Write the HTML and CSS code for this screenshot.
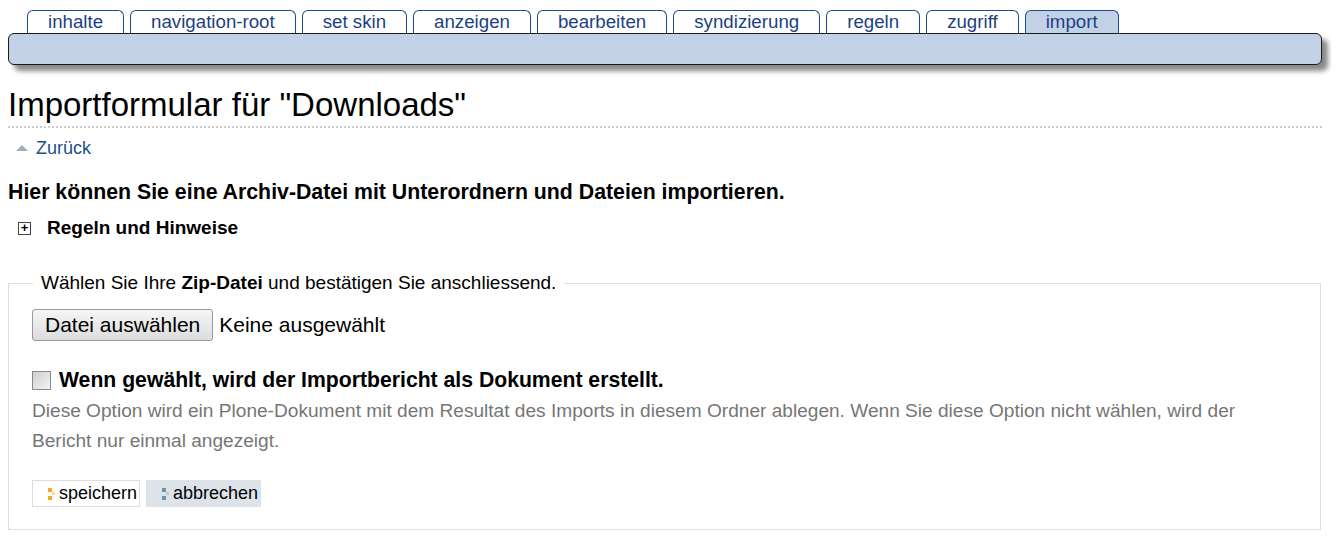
FILE: index.html
```html
<!DOCTYPE html>
<html lang="de">
<head>
    <meta charset="UTF-8">
    <title>Importformular für "Downloads"</title>
    <link rel="stylesheet" href="styles.css">
</head>
<body>
    <!-- content views -->
    <ul class="tabs">
        <li><a href="#">inhalte</a></li>
        <li><a href="#">navigation-root</a></li>
        <li><a href="#">set skin</a></li>
        <li><a href="#">anzeigen</a></li>
        <li><a href="#">bearbeiten</a></li>
        <li><a href="#">syndizierung</a></li>
        <li><a href="#">regeln</a></li>
        <li><a href="#">zugriff</a></li>
        <li class="selected"><a href="#">import</a></li>
    </ul>
    <div class="action-bar"></div>

    <h1 class="page-title">Importformular für "Downloads"</h1>

    <a href="#" class="back-link"><span class="up-arrow"></span>Zurück</a>

    <p class="lead">Hier können Sie eine Archiv-Datei mit Unterordnern und Dateien importieren.</p>

    <div class="toggle">
        <span class="plus-box">+</span>
        <span>Regeln und Hinweise</span>
    </div>

    <form class="import-form">
        <fieldset>
            <legend>Wählen Sie Ihre <b>Zip-Datei</b> und bestätigen Sie anschliessend.</legend>

            <div class="file-row">
                <button type="button" class="file-btn">Datei auswählen</button>
                <span class="file-name">Keine ausgewählt</span>
            </div>

            <label class="check-row">
                <input type="checkbox" class="check">
                <span>Wenn gewählt, wird der Importbericht als Dokument erstellt.</span>
            </label>
            <p class="help">Diese Option wird ein Plone-Dokument mit dem Resultat des Imports in diesem Ordner ablegen. Wenn Sie diese Option nicht wählen, wird der Bericht nur einmal angezeigt.</p>

            <div class="form-buttons">
                <button type="submit" class="btn save">
                    <svg width="8" height="14" viewBox="0 0 8 14"><rect x="0" y="1" width="4" height="4" fill="#f5a81c"/><rect x="4" y="5" width="3" height="3" fill="#fbd98f"/><rect x="0" y="9" width="4" height="4" fill="#f5a81c"/></svg>speichern
                </button>
                <button type="button" class="btn cancel">
                    <svg width="8" height="14" viewBox="0 0 8 14"><rect x="0" y="1" width="4" height="4" fill="#6e92a6"/><rect x="4" y="5" width="3" height="3" fill="#b8cbd6"/><rect x="0" y="9" width="4" height="4" fill="#6e92a6"/></svg>abbrechen
                </button>
            </div>
        </fieldset>
    </form>
</body>
</html>
```

FILE: styles.css
```css
body {
    margin: 8px;
    font-family: "Liberation Sans", Arial, sans-serif;
    color: #000;
    background: #fff;
}

.tabs {
    list-style: none;
    display: flex;
    gap: 6px;
    margin: 2px 0 0 0;
    padding: 0 0 0 19px;
}

.tabs li {
    border: 1px solid #1b4b8f;
    border-bottom: none;
    border-radius: 6px 6px 0 0;
    background: #fff;
    height: 22px;
}

.tabs li a {
    display: block;
    padding: 0 20px;
    line-height: 22px;
    font-size: 18.7px;
    color: #1d3f82;
    text-decoration: none;
}

.tabs li.selected {
    background: #c2d1e6;
}

.action-bar {
    height: 30px;
    margin-right: 10px;
    background: #c2d1e6;
    border: 1px solid #1a1a1a;
    border-radius: 6px;
    box-shadow: 6px 6px 5px #8a8a8a;
}

.page-title {
    font-size: 33px;
    font-weight: normal;
    margin: 22px 10px 0 0;
    padding-bottom: 3px;
    line-height: 36px;
    border-bottom: 2px dotted #ccc;
}

.back-link {
    display: inline-flex;
    align-items: center;
    margin: 9px 0 0 8px;
    font-size: 18px;
    line-height: 22px;
    color: #1f4e8c;
    text-decoration: none;
}

.up-arrow {
    width: 0;
    height: 0;
    border-left: 6px solid transparent;
    border-right: 6px solid transparent;
    border-bottom: 6px solid #9ab0c4;
    margin-right: 8px;
}

.lead {
    font-size: 21.3px;
    line-height: 24px;
    font-weight: bold;
    margin: 21px 0 0 0;
}

.toggle {
    display: flex;
    align-items: center;
    margin: 12px 0 0 10px;
    font-size: 19px;
    line-height: 24px;
    font-weight: bold;
}

.plus-box {
    width: 11px;
    height: 11px;
    border: 1px solid #444;
    font-size: 13px;
    line-height: 10px;
    text-align: center;
    margin-right: 16px;
}

.import-form {
    margin-top: 32px;
    margin-right: 11px;
}

fieldset {
    margin: 0;
    padding: 9px 23px 22px 23px;
    border: 1px solid #ddd;
}

legend {
    font-size: 19px;
    line-height: 22px;
    padding: 0 8px;
    margin-left: 1px;
}

.file-row {
    display: flex;
    align-items: center;
    margin-top: 6px;
}

.file-btn {
    font-family: "Liberation Sans", Arial, sans-serif;
    font-size: 21px;
    height: 32px;
    padding: 0 12px;
    border: 1px solid #9a9a9a;
    border-radius: 3px;
    background: linear-gradient(#f6f6f6, #dcdcdc);
    color: #000;
}

.file-name {
    font-size: 21px;
    margin-left: 6px;
}

.check-row {
    display: flex;
    align-items: center;
    margin-top: 26px;
    font-size: 21.2px;
    line-height: 26px;
    font-weight: bold;
}

.check {
    appearance: none;
    width: 19px;
    height: 19px;
    margin: 0 8px 0 0;
    border: 1px solid #8a8a8a;
    background: linear-gradient(135deg, #cfcfcf, #f4f4f4);
}

.help {
    margin: 3px 40px 0 0;
    font-size: 19.1px;
    line-height: 30px;
    color: #767676;
}

.form-buttons {
    display: flex;
    gap: 6px;
    margin-top: 24px;
}

.btn {
    display: flex;
    align-items: center;
    height: 27px;
    padding: 0 2px 0 15px;
    font-family: "Liberation Sans", Arial, sans-serif;
    font-size: 18px;
    color: #000;
    border: 1px solid #ddd;
    background: #fff;
}

.btn svg {
    margin-right: 3px;
}

.btn.cancel {
    background: #dce4ea;
    border-color: #dce4ea;
}
```
